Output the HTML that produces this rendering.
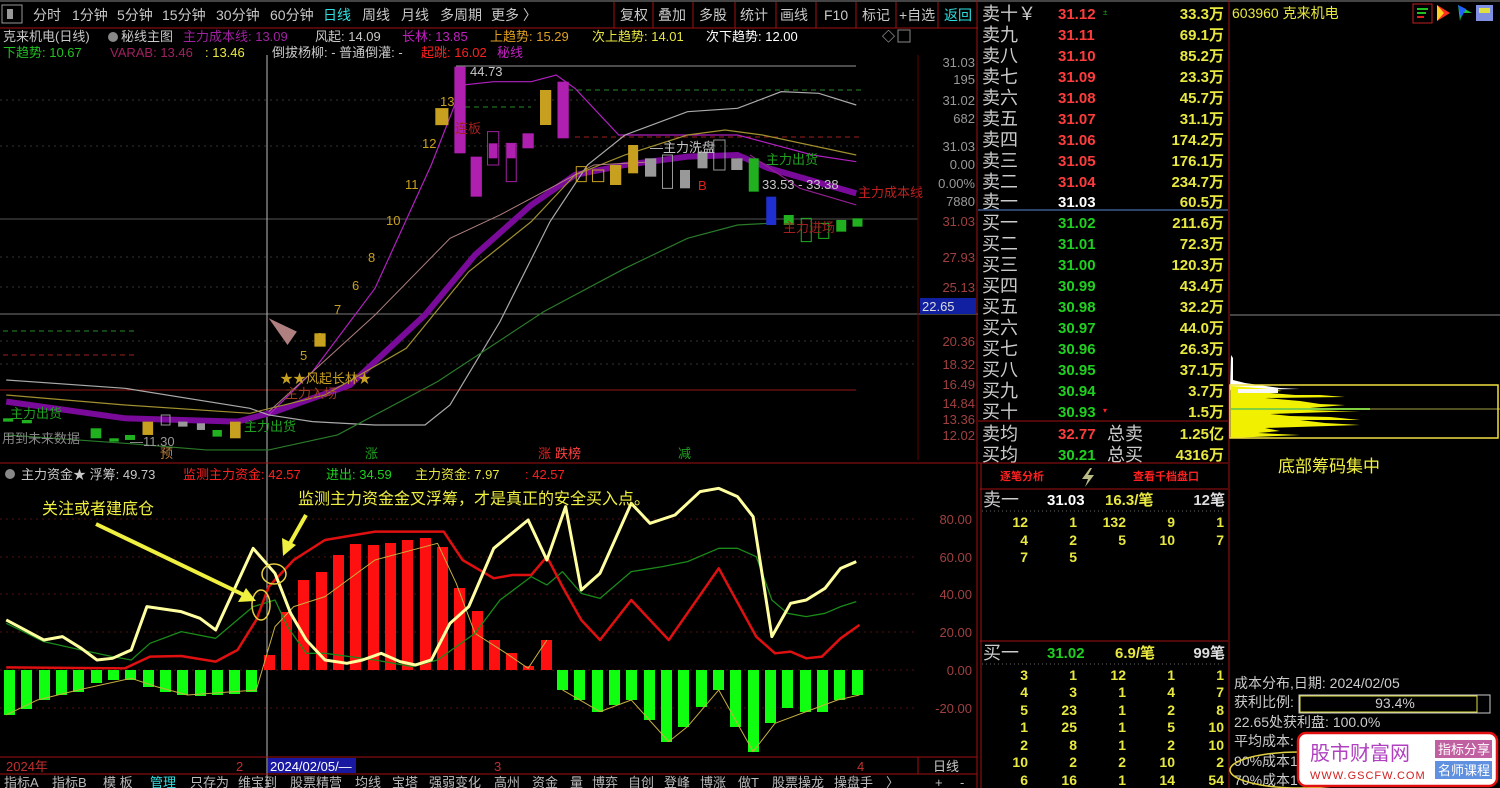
<!DOCTYPE html>
<html><head><meta charset="utf-8"><style>
html,body{margin:0;padding:0;background:#000;width:1500px;height:788px;overflow:hidden}
svg{display:block}
text{font-family:"Liberation Sans","Noto Sans CJK SC",sans-serif}
.g{fill:#c8c8c8}.y{fill:#e8e840}.r{fill:#ff3c3c}.gr{fill:#20e020}.w{fill:#fff}.c{fill:#30e0e0}
</style></head><body>
<svg width="1500" height="788" viewBox="0 0 1500 788" xmlns="http://www.w3.org/2000/svg">
<rect width="1500" height="788" fill="#000"/>
<!-- top toolbar -->
<g font-size="14">
<rect x="2" y="5" width="20" height="18" fill="none" stroke="#999"/><rect x="7" y="9" width="6" height="10" fill="#999"/>
<text x="33" y="20" class="g">分时</text><text x="72" y="20" class="g">1分钟</text><text x="117" y="20" class="g">5分钟</text><text x="162" y="20" class="g">15分钟</text><text x="216" y="20" class="g">30分钟</text><text x="270" y="20" class="g">60分钟</text>
<text x="323" y="20" class="c">日线</text><text x="362" y="20" class="g">周线</text><text x="401" y="20" class="g">月线</text><text x="440" y="20" class="g">多周期</text><text x="491" y="20" class="g">更多 〉</text>
<g stroke="#a01010"><line x1="614" y1="2" x2="614" y2="28"/><line x1="653" y1="2" x2="653" y2="28"/><line x1="693" y1="2" x2="693" y2="28"/><line x1="735" y1="2" x2="735" y2="28"/><line x1="776" y1="2" x2="776" y2="28"/><line x1="816" y1="2" x2="816" y2="28"/><line x1="856" y1="2" x2="856" y2="28"/><line x1="896" y1="2" x2="896" y2="28"/><line x1="938" y1="2" x2="938" y2="28"/></g>
<text x="620" y="20" class="g">复权</text><text x="658" y="20" class="g">叠加</text><text x="699" y="20" class="g">多股</text><text x="740" y="20" class="g">统计</text><text x="780" y="20" class="g">画线</text><text x="824" y="20" class="g">F10</text><text x="862" y="20" class="g">标记</text><text x="899" y="20" class="g">+自选</text><text x="944" y="20" class="c">返回</text>
</g>
<line x1="0" y1="1" x2="1500" y2="1" stroke="#888"/>
<line x1="0" y1="28" x2="978" y2="28" stroke="#a01010"/>
<!-- header lines -->
<g font-size="13">
<text x="3" y="41" class="g">克来机电(日线)</text><circle cx="113" cy="37" r="5" fill="#888"/><text x="121" y="41" class="g">秘线主图</text>
<text x="183" y="41" fill="#a020a0">主力成本线: 13.09</text><text x="315" y="41" class="g">风起: 14.09</text><text x="402" y="41" fill="#c020c0">长林: 13.85</text><text x="490" y="41" fill="#e0a020">上趋势: 15.29</text><text x="592" y="41" class="y">次上趋势: 14.01</text><text x="706" y="41" class="w">次下趋势: 12.00</text>
<text x="3" y="57" fill="#20c020">下趋势: 10.67</text><text x="110" y="57" fill="#a02060">VARAB: 13.46</text><text x="205" y="57" class="y">: 13.46</text><text x="272" y="57" class="g">倒拔杨柳: - 普通倒灌: -</text><text x="421" y="57" fill="#ff2020">起跳: 16.02</text><text x="497" y="57" fill="#c020c0">秘线</text>
<text x="882" y="41" class="g">◇</text><rect x="898" y="30" width="12" height="12" fill="none" stroke="#888"/>
</g>
<!-- main chart grid -->
<g stroke="#333" stroke-dasharray="2,4"><line x1="0" y1="100" x2="918" y2="100"/><line x1="0" y1="146" x2="918" y2="146"/><line x1="0" y1="257" x2="918" y2="257"/><line x1="0" y1="287" x2="918" y2="287"/><line x1="0" y1="341" x2="918" y2="341"/><line x1="0" y1="364" x2="918" y2="364"/></g>
<line x1="0" y1="219" x2="918" y2="219" stroke="#555"/>
<line x1="0" y1="314" x2="978" y2="314" stroke="#777"/>
<line x1="0" y1="390" x2="856" y2="390" stroke="#901818"/>
<line x1="456" y1="66" x2="856" y2="66" stroke="#999"/>
<line x1="568" y1="90" x2="862" y2="90" stroke="#2a8a2a" stroke-dasharray="5,4"/>
<line x1="456" y1="107" x2="531" y2="107" stroke="#2a8a2a" stroke-dasharray="5,4"/>
<line x1="575" y1="137" x2="862" y2="137" stroke="#a02020" stroke-dasharray="5,4"/>
<line x1="3" y1="331" x2="135" y2="331" stroke="#2a8a2a" stroke-dasharray="5,4"/>
<line x1="3" y1="355" x2="135" y2="355" stroke="#a02020" stroke-dasharray="5,4"/>
<line x1="267" y1="55" x2="267" y2="788" stroke="#bbb"/>
<g transform="translate(0,55) scale(0.625,0.3333)" fill="none">
<polyline vector-effect="non-scaling-stroke" stroke="#7a0a9a" stroke-width="6" points="10,1040 200,1090 380,1100 440,1070 560,990 680,780 760,600 850,450 920,360 1000,330 1100,305 1180,300 1230,340 1370,415"/>
<polyline vector-effect="non-scaling-stroke" stroke="#b020c0" stroke-width="1.2" points="430,1080 500,950 600,700 690,330 740,90 790,80 850,80 890,60 920,100 990,240 1100,240 1180,240 1300,300 1370,320"/>
<polyline vector-effect="non-scaling-stroke" stroke="#902090" stroke-width="1.2" points="1200,300 1280,400 1370,450"/>
<polyline vector-effect="non-scaling-stroke" stroke="#aaa" stroke-width="1.2" points="10,975 200,1000 400,1060 430,1080 500,1100 600,1110 680,1110 720,1050 800,800 880,500 940,330 1000,240 1100,170 1180,160 1250,110 1310,115 1370,150"/>
<polyline vector-effect="non-scaling-stroke" stroke="#a09030" stroke-width="1.2" points="10,1020 200,1050 400,1075 520,1020 650,880 750,650 850,500 920,360 1000,300 1100,240 1160,225 1220,240 1370,300"/>
<polyline vector-effect="non-scaling-stroke" stroke="#b08080" stroke-width="1" points="430,1070 600,780 720,550 800,480 880,400 950,330 1050,320"/>
<polyline vector-effect="non-scaling-stroke" stroke="#2a7a2a" stroke-width="1.2" points="10,1140 200,1165 330,1185 430,1185 540,1140 700,980 870,770 1000,640 1100,550 1180,510 1230,505"/>
<g stroke-width="1" vector-effect="non-scaling-stroke">
<rect x="697" y="160" width="20" height="50" fill="#c8a020" stroke="#c8a020"/>
<rect x="727" y="35" width="18" height="260" fill="#b020b0"/>
<rect x="753" y="305" width="18" height="120" fill="#b020b0"/>
<rect x="780" y="230" width="18" height="100" fill="none" stroke="#a020a0" vector-effect="non-scaling-stroke"/><rect x="782" y="265" width="14" height="45" fill="#b020b0"/>
<rect x="810" y="265" width="16" height="115" fill="none" stroke="#a020a0" vector-effect="non-scaling-stroke"/><rect x="811" y="265" width="14" height="45" fill="#b020b0"/>
<rect x="836" y="235" width="18" height="45" fill="#b020b0"/>
<rect x="864" y="105" width="18" height="105" fill="#c8a020"/>
<rect x="892" y="80" width="18" height="170" fill="#b020b0"/>
<rect x="922" y="335" width="16" height="45" fill="none" stroke="#c8a020" vector-effect="non-scaling-stroke"/>
<rect x="948" y="345" width="18" height="35" fill="none" stroke="#c8a020" vector-effect="non-scaling-stroke"/>
<rect x="976" y="330" width="18" height="60" fill="#c8a020"/>
<rect x="1005" y="270" width="16" height="85" fill="#c8a020"/>
<rect x="1032" y="310" width="18" height="55" fill="#999"/>
<rect x="1060" y="300" width="16" height="100" fill="none" stroke="#999" vector-effect="non-scaling-stroke"/>
<rect x="1088" y="345" width="16" height="55" fill="#999"/>
<rect x="1116" y="290" width="16" height="50" fill="#999"/>
<rect x="1142" y="255" width="18" height="90" fill="none" stroke="#999" vector-effect="non-scaling-stroke"/>
<rect x="1170" y="310" width="18" height="35" fill="#999"/>
<rect x="1198" y="310" width="16" height="100" fill="#20b020"/>
<rect x="1226" y="425" width="16" height="85" fill="#2030d0"/>
<rect x="1254" y="480" width="16" height="30" fill="#20b020"/>
<rect x="1282" y="490" width="16" height="70" fill="none" stroke="#20b020" vector-effect="non-scaling-stroke"/>
<rect x="1310" y="505" width="16" height="45" fill="none" stroke="#20b020" vector-effect="non-scaling-stroke"/>
<rect x="1338" y="495" width="16" height="35" fill="#20b020"/>
<rect x="1364" y="490" width="16" height="25" fill="#20b020"/>
<rect x="5" y="1090" width="16" height="10" fill="#20b020"/>
<rect x="35" y="1095" width="16" height="10" fill="#20b020"/>
<rect x="145" y="1120" width="17" height="30" fill="#20b020"/>
<rect x="175" y="1150" width="15" height="10" fill="#20b020"/>
<rect x="200" y="1140" width="16" height="15" fill="#20b020"/>
<rect x="228" y="1100" width="17" height="40" fill="#c8a020"/>
<rect x="258" y="1080" width="14" height="30" fill="none" stroke="#999" vector-effect="non-scaling-stroke"/>
<rect x="285" y="1100" width="15" height="15" fill="#999"/>
<rect x="315" y="1105" width="13" height="20" fill="#999"/>
<rect x="340" y="1125" width="15" height="20" fill="#20b020"/>
<rect x="368" y="1100" width="17" height="50" fill="#c8a020"/>
<rect x="503" y="835" width="18" height="40" fill="#c8a020"/>
</g>
<polygon points="430,790 475,830 460,870" fill="#b08080"/>
</g>
<!-- chart labels -->
<g font-size="13">
<text x="470" y="76" class="g">44.73</text><text x="440" y="106" fill="#c8a020">13</text><text x="422" y="148" fill="#c8a020">12</text><text x="405" y="189" fill="#c8a020">11</text><text x="386" y="225" fill="#c8a020">10</text><text x="368" y="262" fill="#c8a020">8</text><text x="352" y="290" fill="#c8a020">6</text><text x="334" y="314" fill="#c8a020">7</text><text x="316" y="342" fill="#c8a020">6</text><text x="300" y="360" fill="#c8a020">5</text>
<text x="280" y="383" fill="#c8a020">★★风起长林★</text><text x="285" y="398" fill="#a04020">主力入场</text>
<text x="455" y="133" fill="#a02020">连板</text>
<text x="650" y="152" class="g">—主力洗盘</text><text x="766" y="164" fill="#20a020">主力出货</text><text x="762" y="189" class="g">33.53 - 33.38</text>
<text x="698" y="190" fill="#e02020">B</text><text x="858" y="197" fill="#c02020">主力成本线</text>
<text x="783" y="232" fill="#a02020">主力进场</text>
<text x="10" y="418" fill="#20a020">主力出货</text><text x="2" y="443" fill="#888">用到未来数据</text><text x="130" y="446" fill="#999">—11.30</text><text x="244" y="431" fill="#20a020">主力出货</text>
<text x="160" y="458" fill="#c08040">预</text><text x="365" y="458" fill="#20a020">涨</text><text x="538" y="458" fill="#e02020">涨</text><text x="555" y="458" fill="#ff4040">跌榜</text><text x="678" y="458" fill="#20a020">减</text>
</g>
<!-- price axis -->
<line x1="918" y1="55" x2="918" y2="460" stroke="#600"/>
<line x1="977" y1="0" x2="977" y2="788" stroke="#a01010"/>
<g font-size="13" text-anchor="end" fill="#999">
<text x="975" y="67">31.03</text><text x="975" y="84">195</text><text x="975" y="105">31.02</text><text x="975" y="123">682</text><text x="975" y="151">31.03</text><text x="975" y="169">0.00</text><text x="975" y="188">0.00%</text><text x="975" y="206">7880</text>
</g>
<g font-size="13" text-anchor="end" fill="#a04040">
<text x="975" y="226">31.03</text><text x="975" y="262">27.93</text><text x="975" y="292">25.13</text><text x="975" y="346">20.36</text><text x="975" y="369">18.32</text><text x="975" y="389">16.49</text><text x="975" y="408">14.84</text><text x="975" y="424">13.36</text><text x="975" y="440">12.02</text>
</g>
<rect x="920" y="298" width="56" height="16" fill="#1020a0"/><text x="922" y="311" font-size="13" fill="#ddd">22.65</text>
<line x1="0" y1="463" x2="977" y2="463" stroke="#a01010"/>
<!-- indicator -->
<g font-size="13">
<circle cx="10" cy="474" r="5" fill="#888"/><text x="21" y="479" class="g">主力资金★ 浮筹: 49.73</text><text x="183" y="479" fill="#ff2020">监测主力资金: 42.57</text><text x="326" y="479" fill="#20d020">进出: 34.59</text><text x="415" y="479" class="y">主力资金: 7.97</text><text x="525" y="479" fill="#ff2020">: 42.57</text>
</g>
<g stroke="#501010" stroke-dasharray="2,4"><line x1="0" y1="519" x2="918" y2="519"/><line x1="0" y1="557" x2="918" y2="557"/><line x1="0" y1="594" x2="918" y2="594"/><line x1="0" y1="632" x2="918" y2="632"/><line x1="0" y1="670" x2="918" y2="670"/><line x1="0" y1="708" x2="918" y2="708"/></g>
<g font-size="13" text-anchor="end" fill="#a04040"><text x="972" y="524">80.00</text><text x="972" y="562">60.00</text><text x="972" y="599">40.00</text><text x="972" y="637">20.00</text><text x="972" y="675">0.00</text><text x="972" y="713">-20.00</text></g>
<g fill="#10ff10">
<rect x="4" y="670" width="11" height="45"/><rect x="21" y="670" width="11" height="39"/><rect x="39" y="670" width="11" height="30"/><rect x="56" y="670" width="11" height="25"/><rect x="73" y="670" width="11" height="22"/><rect x="91" y="670" width="11" height="13"/><rect x="108" y="670" width="11" height="10"/><rect x="125" y="670" width="11" height="10"/><rect x="143" y="670" width="11" height="17"/><rect x="160" y="670" width="11" height="22"/><rect x="177" y="670" width="11" height="25"/><rect x="195" y="670" width="11" height="26"/><rect x="212" y="670" width="11" height="25"/><rect x="229" y="670" width="11" height="24"/><rect x="246" y="670" width="11" height="22"/>
<rect x="557" y="670" width="11" height="20"/><rect x="574" y="670" width="11" height="30"/><rect x="592" y="670" width="11" height="42"/><rect x="609" y="670" width="11" height="35"/><rect x="626" y="670" width="11" height="30"/><rect x="644" y="670" width="11" height="50"/><rect x="661" y="670" width="11" height="72"/><rect x="678" y="670" width="11" height="57"/><rect x="696" y="670" width="11" height="37"/><rect x="713" y="670" width="11" height="20"/><rect x="730" y="670" width="11" height="57"/><rect x="748" y="670" width="11" height="82"/><rect x="765" y="670" width="11" height="53"/><rect x="782" y="670" width="11" height="38"/><rect x="800" y="670" width="11" height="42"/><rect x="817" y="670" width="11" height="42"/><rect x="834" y="670" width="11" height="30"/><rect x="852" y="670" width="11" height="25"/>
</g>
<g fill="#ff1010">
<rect x="264" y="655" width="11" height="15"/><rect x="281" y="612" width="11" height="58"/><rect x="298" y="580" width="11" height="90"/><rect x="316" y="572" width="11" height="98"/><rect x="333" y="555" width="11" height="115"/><rect x="350" y="544" width="11" height="126"/><rect x="368" y="545" width="11" height="125"/><rect x="385" y="543" width="11" height="127"/><rect x="402" y="540" width="11" height="130"/><rect x="420" y="538" width="11" height="132"/><rect x="437" y="547" width="11" height="123"/><rect x="454" y="588" width="11" height="82"/><rect x="472" y="611" width="11" height="59"/><rect x="489" y="640" width="11" height="30"/><rect x="506" y="653" width="11" height="17"/><rect x="523" y="666" width="11" height="4"/><rect x="541" y="640" width="11" height="30"/>
</g>
<g transform="translate(0,460) scale(0.625,0.3333)" fill="none" stroke-linejoin="round">
<polyline vector-effect="non-scaling-stroke" stroke="#c8b040" stroke-width="1" points="10,765 60,720 125,690 210,655 250,680 300,705 410,690 440,500 470,440 520,410 600,300 700,250 730,370 760,520 810,580 845,625 875,540"/>
<polyline vector-effect="non-scaling-stroke" stroke="#c8b040" stroke-width="1" points="900,690 960,755 1010,720 1070,845 1100,800 1150,690 1205,875 1240,790 1290,755 1340,720 1375,705"/>
<polyline vector-effect="non-scaling-stroke" stroke="#1a8a1a" stroke-width="1.3" points="10,490 70,545 130,570 180,590 210,600 240,550 290,515 345,535 405,440 440,420 460,500 490,580 520,580 600,600 660,620 700,600 760,520 800,420 850,350 875,375 900,335 930,400 960,415 1010,335 1060,320 1100,305 1150,265 1180,265 1210,290 1235,420 1260,460 1290,470 1320,460 1345,440 1370,425"/>
<polyline vector-effect="non-scaling-stroke" stroke="#e01010" stroke-width="2.5" points="10,622 200,625 240,590 290,588 345,605 380,570 410,480 430,380 470,300 520,240 600,215 710,215 740,300 790,355 820,345 850,345 875,290 900,380 930,480 960,540 1010,420 1040,480 1070,540 1150,325 1210,530 1240,580 1265,575 1290,595 1315,590 1345,535 1375,495"/>
<polyline vector-effect="non-scaling-stroke" stroke="#ffffa0" stroke-width="3" points="10,480 40,510 70,540 100,530 130,565 155,600 180,595 210,570 235,440 290,455 320,475 345,510 405,265 440,340 465,460 490,540 520,600 555,610 580,600 610,580 640,605 665,615 690,600 720,490 750,440 790,265 845,180 875,300 905,140 930,390 960,340 1010,130 1040,190 1080,165 1120,95 1150,85 1180,110 1205,170 1235,530 1265,430 1290,420 1320,385 1345,325 1370,305"/>
</g>
<ellipse cx="261" cy="605" rx="9" ry="15" fill="none" stroke="#e8d040" stroke-width="1.5"/>
<ellipse cx="274" cy="574" rx="12" ry="10" fill="none" stroke="#e8d040" stroke-width="1.5"/>
<text x="42" y="514" font-size="16" fill="#f0f040">关注或者建底仓</text>
<text x="298" y="504" font-size="16" fill="#f0f040">监测主力资金金叉浮筹，才是真正的安全买入点。</text>
<line x1="96" y1="524" x2="246" y2="596" stroke="#f0f040" stroke-width="4"/><polygon points="256,601 238,602 246,588" fill="#f0f040"/>
<line x1="306" y1="515" x2="289" y2="545" stroke="#f0f040" stroke-width="4"/><polygon points="283,556 282,538 296,545" fill="#f0f040"/>
<!-- bottom bars -->
<line x1="0" y1="757" x2="977" y2="757" stroke="#a01010"/>
<line x1="0" y1="774" x2="977" y2="774" stroke="#a01010"/>
<line x1="918" y1="757" x2="918" y2="774" stroke="#a01010"/>
<rect x="268" y="758" width="88" height="15" fill="#1818a0"/>
<g font-size="13"><text x="6" y="771" fill="#c03030">2024年</text><text x="236" y="771" fill="#c03030">2</text><text x="270" y="771" class="w">2024/02/05/—</text><text x="494" y="771" fill="#c03030">3</text><text x="857" y="771" fill="#c03030">4</text><text x="933" y="771" class="g">日线</text></g>
<g font-size="13" fill="#bbb"><text x="4" y="787">指标A</text><text x="52" y="787">指标B</text><text x="103" y="787">模 板</text><text x="150" y="787" class="c">管理</text><text x="190" y="787">只存为</text><text x="238" y="787">维宝到</text><text x="290" y="787">股票精营</text><text x="355" y="787">均线</text><text x="392" y="787">宝塔</text><text x="429" y="787">强弱变化</text><text x="494" y="787">高州</text><text x="532" y="787">资金</text><text x="570" y="787">量</text><text x="592" y="787">博弈</text><text x="628" y="787">自创</text><text x="664" y="787">登峰</text><text x="700" y="787">博涨</text><text x="738" y="787">做T</text><text x="772" y="787">股票操龙</text><text x="834" y="787">操盘手</text><text x="886" y="787">〉</text><text x="935" y="787">+</text><text x="960" y="787">-</text></g>
<!-- order book -->
<g font-size="18" fill="#ccc">
<text x="982" y="20">卖十￥</text><text x="982" y="41">卖九</text><text x="982" y="62">卖八</text><text x="982" y="83">卖七</text><text x="982" y="104">卖六</text><text x="982" y="125">卖五</text><text x="982" y="146">卖四</text><text x="982" y="167">卖三</text><text x="982" y="188">卖二</text><text x="982" y="208">卖一</text>
<text x="982" y="229">买一</text><text x="982" y="250">买二</text><text x="982" y="271">买三</text><text x="982" y="292">买四</text><text x="982" y="313">买五</text><text x="982" y="334">买六</text><text x="982" y="355">买七</text><text x="982" y="376">买八</text><text x="982" y="397">买九</text><text x="982" y="418">买十</text>
<text x="982" y="440">卖均</text><text x="982" y="461">买均</text><text x="1107" y="440">总卖</text><text x="1107" y="461">总买</text>
</g>
<g font-size="15" font-weight="bold">
<g class="r"><text x="1058" y="19">31.12</text><text x="1058" y="40">31.11</text><text x="1058" y="61">31.10</text><text x="1058" y="82">31.09</text><text x="1058" y="103">31.08</text><text x="1058" y="124">31.07</text><text x="1058" y="145">31.06</text><text x="1058" y="166">31.05</text><text x="1058" y="187">31.04</text><text x="1058" y="439">32.77</text></g>
<text x="1058" y="207" class="w">31.03</text>
<g fill="#20d020"><text x="1058" y="228">31.02</text><text x="1058" y="249">31.01</text><text x="1058" y="270">31.00</text><text x="1058" y="291">30.99</text><text x="1058" y="312">30.98</text><text x="1058" y="333">30.97</text><text x="1058" y="354">30.96</text><text x="1058" y="375">30.95</text><text x="1058" y="396">30.94</text><text x="1058" y="417">30.93</text><text x="1058" y="460">30.21</text></g>
<g class="y" text-anchor="end"><text x="1224" y="19">33.3万</text><text x="1224" y="40">69.1万</text><text x="1224" y="61">85.2万</text><text x="1224" y="82">23.3万</text><text x="1224" y="103">45.7万</text><text x="1224" y="124">31.1万</text><text x="1224" y="145">174.2万</text><text x="1224" y="166">176.1万</text><text x="1224" y="187">234.7万</text><text x="1224" y="207">60.5万</text>
<text x="1224" y="228">211.6万</text><text x="1224" y="249">72.3万</text><text x="1224" y="270">120.3万</text><text x="1224" y="291">43.4万</text><text x="1224" y="312">32.2万</text><text x="1224" y="333">44.0万</text><text x="1224" y="354">26.3万</text><text x="1224" y="375">37.1万</text><text x="1224" y="396">3.7万</text><text x="1224" y="417">1.5万</text><text x="1224" y="439">1.25亿</text><text x="1224" y="460">4316万</text></g>
</g>
<text x="1103" y="15" font-size="8" fill="#20a020">±</text><text x="1103" y="413" font-size="8" fill="#ff2020">▾</text>
<line x1="978" y1="210" x2="1228" y2="210" stroke="#3a5a90" stroke-width="1.5"/>
<line x1="978" y1="421" x2="1228" y2="421" stroke="#a01010"/>
<line x1="1229" y1="0" x2="1229" y2="788" stroke="#a01010"/>
<line x1="978" y1="463" x2="1228" y2="463" stroke="#a01010"/>
<!-- tick analysis -->
<line x1="980" y1="489" x2="1228" y2="489" stroke="#a01010"/>
<line x1="980" y1="641" x2="1228" y2="641" stroke="#a01010"/>
<line x1="981" y1="463" x2="981" y2="788" stroke="#a01010"/>
<g font-size="11" fill="#ff2020" font-weight="bold"><text x="1000" y="480">逐笔分析</text><text x="1133" y="480">查看千档盘口</text></g>
<polygon points="1090,468 1082,479 1088,479 1085,487 1094,475 1088,475 1092,468" fill="#bb8"/>
<g font-size="18" fill="#ccc"><text x="983" y="506">卖一</text><text x="983" y="659">买一</text></g>
<g font-size="15" font-weight="bold"><text x="1047" y="505" class="w">31.03</text><text x="1105" y="505" class="y">16.3/笔</text><text x="1225" y="505" text-anchor="end" fill="#ddd">12笔</text>
<text x="1047" y="658" fill="#20d020">31.02</text><text x="1115" y="658" class="y">6.9/笔</text><text x="1225" y="658" text-anchor="end" fill="#ddd">99笔</text></g>
<line x1="982" y1="511" x2="1226" y2="511" stroke="#666" stroke-dasharray="1,3"/>
<line x1="982" y1="664" x2="1226" y2="664" stroke="#666" stroke-dasharray="1,3"/>
<g font-size="14" font-weight="bold" class="y" text-anchor="end">
<text x="1028" y="527">12</text><text x="1077" y="527">1</text><text x="1126" y="527">132</text><text x="1175" y="527">9</text><text x="1224" y="527">1</text>
<text x="1028" y="545">4</text><text x="1077" y="545">2</text><text x="1126" y="545">5</text><text x="1175" y="545">10</text><text x="1224" y="545">7</text>
<text x="1028" y="562">7</text><text x="1077" y="562">5</text>
<text x="1028" y="680">3</text><text x="1077" y="680">1</text><text x="1126" y="680">12</text><text x="1175" y="680">1</text><text x="1224" y="680">1</text>
<text x="1028" y="697">4</text><text x="1077" y="697">3</text><text x="1126" y="697">1</text><text x="1175" y="697">4</text><text x="1224" y="697">7</text>
<text x="1028" y="715">5</text><text x="1077" y="715">23</text><text x="1126" y="715">1</text><text x="1175" y="715">2</text><text x="1224" y="715">8</text>
<text x="1028" y="732">1</text><text x="1077" y="732">25</text><text x="1126" y="732">1</text><text x="1175" y="732">5</text><text x="1224" y="732">10</text>
<text x="1028" y="750">2</text><text x="1077" y="750">8</text><text x="1126" y="750">1</text><text x="1175" y="750">2</text><text x="1224" y="750">10</text>
<text x="1028" y="767">10</text><text x="1077" y="767">2</text><text x="1126" y="767">2</text><text x="1175" y="767">10</text><text x="1224" y="767">2</text>
<text x="1028" y="785">6</text><text x="1077" y="785">16</text><text x="1126" y="785">1</text><text x="1175" y="785">14</text><text x="1224" y="785">54</text>
</g>
<!-- right panel -->
<text x="1232" y="18" font-size="14" class="y">603960 克来机电</text>
<rect x="1413" y="4" width="19" height="19" fill="none" stroke="#c02020"/><g stroke-width="2"><line x1="1417" y1="9" x2="1428" y2="9" stroke="#20c020"/><line x1="1417" y1="13" x2="1426" y2="13" stroke="#20c020"/><line x1="1417" y1="17" x2="1424" y2="17" stroke="#e02020"/></g>
<polygon points="1437,5 1450,13 1437,21" fill="#ff3020"/><polygon points="1437,5 1444,13 1437,21" fill="#ffd020"/>
<polygon points="1458,5 1472,13 1462,13 1460,21" fill="#20c030"/><polygon points="1458,5 1466,9 1461,18" fill="#2060ff"/>
<rect x="1476" y="5" width="17" height="16" fill="#8090e0"/><rect x="1479" y="8" width="11" height="5" fill="#e0e040"/>
<line x1="1230" y1="315" x2="1500" y2="315" stroke="#888"/>
<polygon points="1231,355 1233,358 1233,380 1245,383 1280,388 1300,389 1230,390" fill="#fff"/>
<polygon points="1231,386 1270,389 1282,391 1262,392 1270,393 1295,395 1320,395 1345,397 1265,398 1300,401 1320,404 1345,405 1310,408 1235,410 1310,410 1340,411 1360,411 1270,414 1290,416 1330,417 1360,420 1300,420 1325,423 1360,425 1265,428 1280,431 1258,433 1300,435 1231,438" fill="#f0f000"/>
<rect x="1238" y="389" width="40" height="4" fill="#f8f8f8"/>
<line x1="1231" y1="409" x2="1500" y2="409" stroke="#a0a040"/><line x1="1231" y1="409" x2="1370" y2="409" stroke="#80d040" stroke-width="2"/>
<rect x="1230" y="385" width="268" height="53" fill="none" stroke="#f0e040" stroke-width="1.5"/>
<text x="1278" y="472" font-size="17" fill="#f0f040">底部筹码集中</text>
<g font-size="14" fill="#ccc"><text x="1234" y="688">成本分布,日期: 2024/02/05</text><text x="1234" y="707">获利比例:</text><text x="1234" y="727">22.65处获利盘: 100.0%</text><text x="1234" y="746">平均成本:</text><text x="1234" y="766">90%成本1</text><text x="1234" y="785">70%成本1</text></g>
<rect x="1299" y="695" width="191" height="18" fill="none" stroke="#ccc"/><rect x="1300" y="696" width="177" height="16" fill="none" stroke="#e0e040"/>
<text x="1395" y="708" font-size="14" fill="#ccc" text-anchor="middle">93.4%</text>
<ellipse cx="1300" cy="770" rx="70" ry="18" fill="none" stroke="#e0d040" stroke-width="1.5"/>
<rect x="1298" y="733" width="199" height="53" rx="8" fill="#fff" stroke="#e01010" stroke-width="2.5"/>
<text x="1310" y="760" font-size="20" fill="#b040c0">股市财富网</text>
<text x="1310" y="779" font-size="11" fill="#d02020" font-family="Liberation Serif,serif" letter-spacing="1">WWW.GSCFW.COM</text>
<rect x="1435" y="740" width="57" height="18" fill="#c060a0"/><text x="1438" y="754" font-size="13" class="w">指标分享</text>
<rect x="1435" y="761" width="57" height="18" fill="#6090e0"/><text x="1438" y="775" font-size="13" class="w">名师课程</text>
</svg>
</body></html>
